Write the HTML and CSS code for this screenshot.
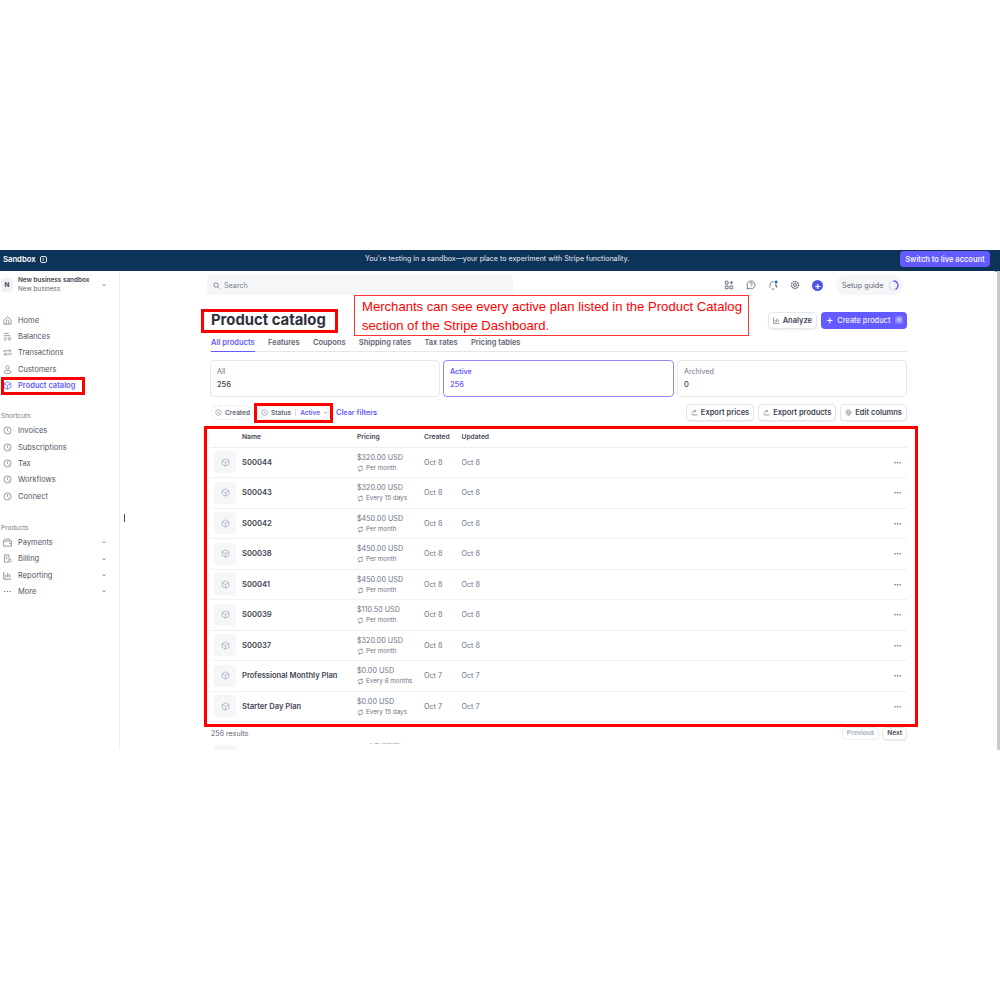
FILE: index.html
```html
<!DOCTYPE html>
<html lang="en">
<head>
  <meta charset="UTF-8">
  <title>Product catalog</title>
  <link rel="stylesheet" href="styles.css">
</head>
<body>
<svg class="defs" width="0" height="0">
  <symbol id="box" viewBox="0 0 16 16"><path d="M8 1.500 14 4.700v6.600L8 14.500 2 11.300V4.700zM2 4.700 8 8l6-3.300M8 8v6.500" fill="none" stroke="currentColor" stroke-width="1.300"/></symbol>
  <symbol id="clock" viewBox="0 0 16 16"><circle cx="8" cy="8" r="6.300" fill="none" stroke="currentColor" stroke-width="1.300"/><path d="M8 4.500V8l2 2" fill="none" stroke="currentColor" stroke-width="1.300"/></symbol>
  <symbol id="chev" viewBox="0 0 16 16"><path d="M3.500 6 8 10.500 12.500 6" fill="none" stroke="currentColor" stroke-width="2"/></symbol>
  <symbol id="repeat" viewBox="0 0 16 16"><path d="M3 9V6.500a3 3 0 0 1 3-3h6M10 1l2.500 2.500L10 6M13 7v2.500a3 3 0 0 1-3 3H4M6 15l-2.500-2.500L6 10" fill="none" stroke="currentColor" stroke-width="1.500"/></symbol>
  <symbol id="export" viewBox="0 0 16 16"><path d="M1.500 13.500h13M3 10c0-4 3-5.500 7-5.500M8 1.500l3 3-3 3" fill="none" stroke="currentColor" stroke-width="1.500"/></symbol>
  <symbol id="circx" viewBox="0 0 16 16"><circle cx="8" cy="8" r="6.500" fill="none" stroke="currentColor" stroke-width="1.300"/><path d="M5.500 5.500l5 5M10.500 5.500l-5 5" fill="none" stroke="currentColor" stroke-width="1.300"/></symbol>
  <symbol id="gear" viewBox="0 0 16 16"><circle cx="8" cy="8" r="2.300" fill="none" stroke="currentColor" stroke-width="1.500"/><circle cx="8" cy="8" r="5.600" fill="none" stroke="currentColor" stroke-width="2.200" stroke-dasharray="2.500 1.200"/></symbol>
  <symbol id="bars" viewBox="0 0 16 16"><path d="M1.500 1.500v13h13M5 11V7M8.500 11V3.500M12 11V6" fill="none" stroke="currentColor" stroke-width="1.500"/></symbol>
</svg>

<div class="shot">
  <div class="banner">
    <div class="banner-left">Sandbox <span class="info">i</span></div>
    <div class="banner-msg">You're testing in a sandbox—your place to experiment with Stripe functionality.</div>
    <button class="live">Switch to live account</button>
  </div>

  <div class="app">
    <aside class="side">
      <div class="acct">
        <span class="acct-logo">N</span>
        <div class="acct-text"><b>New business sandbox</b><span>New business</span></div>
        <svg class="chev"><use href="#chev"/></svg>
      </div>

      <nav class="nav">
        <a><svg class="ico" viewBox="0 0 16 16"><path d="M1.500 7 8 1.500 14.500 7v7.500h-13zM5.500 14.500V9.500a2.500 2.500 0 0 1 5 0v5" fill="none" stroke="currentColor" stroke-width="1.200"/></svg>Home</a>
        <a><svg class="ico" viewBox="0 0 16 16"><path d="M1.500 2.500h9M1.500 6.500h11M1.500 10.500h5M1.500 14h5" fill="none" stroke="currentColor" stroke-width="1.200"/><circle cx="11.500" cy="12" r="2.300" fill="none" stroke="currentColor" stroke-width="1.200"/></svg>Balances</a>
        <a><svg class="ico" viewBox="0 0 16 16"><path d="M1.500 7V5h12M11 2l3 3-3 3M14.500 9v2h-12M5 8l-3 3 3 3" fill="none" stroke="currentColor" stroke-width="1.200"/></svg>Transactions</a>
        <a><svg class="ico" viewBox="0 0 16 16"><circle cx="8" cy="4.500" r="3" fill="none" stroke="currentColor" stroke-width="1.200"/><rect x="2" y="10" width="12" height="5" rx="2.500" fill="none" stroke="currentColor" stroke-width="1.200"/></svg>Customers</a>
        <a class="on"><svg class="ico"><use href="#box"/></svg>Product catalog</a>
      </nav>

      <div class="nav-label">Shortcuts</div>
      <nav class="nav">
        <a><svg class="ico"><use href="#clock"/></svg>Invoices</a>
        <a><svg class="ico"><use href="#clock"/></svg>Subscriptions</a>
        <a><svg class="ico"><use href="#clock"/></svg>Tax</a>
        <a><svg class="ico"><use href="#clock"/></svg>Workflows</a>
        <a><svg class="ico"><use href="#clock"/></svg>Connect</a>
      </nav>

      <div class="nav-label nav-label-products">Products</div>
      <nav class="nav">
        <a><svg class="ico" viewBox="0 0 16 16"><path d="M1 5.500h14v9H1zM1 5.500 3 2h9l1 3.500M10.500 10h4.500" fill="none" stroke="currentColor" stroke-width="1.200"/></svg>Payments<svg class="chev"><use href="#chev"/></svg></a>
        <a><svg class="ico" viewBox="0 0 16 16"><path d="M9.500 14.500h-7v-13h8v7M5 5h3M5 8h3" fill="none" stroke="currentColor" stroke-width="1.200"/><circle cx="12" cy="12" r="2.500" fill="none" stroke="currentColor" stroke-width="1.200"/></svg>Billing<svg class="chev"><use href="#chev"/></svg></a>
        <a><svg class="ico"><use href="#bars"/></svg>Reporting<svg class="chev"><use href="#chev"/></svg></a>
        <a><svg class="ico" viewBox="0 0 16 16"><path d="M2 8h2M7 8h2M12 8h2" fill="none" stroke="currentColor" stroke-width="2"/></svg>More<svg class="chev"><use href="#chev"/></svg></a>
      </nav>
    </aside>

    <main class="main">
      <div class="topbar">
        <div class="search">
          <svg class="search-ico" viewBox="0 0 16 16"><circle cx="7" cy="7" r="5" fill="none" stroke="currentColor" stroke-width="1.700"/><path d="M11 11l4 4" stroke="currentColor" stroke-width="1.700"/></svg>
          Search
        </div>
        <div class="tools">
          <svg class="tool" viewBox="0 0 16 16"><path d="M2 2h4.500v4.500H2zM2 9.500h4.500V14H2zM9.500 9.500H14V14H9.500zM11.700 1.500v5.500M9 4.200h5.500" fill="none" stroke="currentColor" stroke-width="1.400"/></svg>
          <svg class="tool" viewBox="0 0 16 16"><path d="M8 1.500a6.300 6.300 0 1 1-3 11.800L1.500 14.500l1-3.300A6.300 6.300 0 0 1 8 1.500z" fill="none" stroke="currentColor" stroke-width="1.300"/><path d="M6 6.200a2 2 0 1 1 3 1.700c-.7.400-1 .8-1 1.600M8 11v1" fill="none" stroke="currentColor" stroke-width="1.300"/></svg>
          <svg class="tool" viewBox="0 0 16 16"><path d="M2 12c1.500-1.500 1.500-3 1.500-5a4.500 4.500 0 0 1 6-4.200M12.500 7c0 2 0 3.500 1.500 5zM6 14.500h4" fill="none" stroke="currentColor" stroke-width="1.400"/><circle cx="13" cy="3" r="2.400" fill="#0570de"/></svg>
          <svg class="tool"><use href="#gear"/></svg>
          <span class="add-round">+</span>
          <div class="setup">Setup guide
            <svg class="spin" viewBox="0 0 16 16"><circle cx="8" cy="8" r="6.500" fill="none" stroke="#dfe3ea" stroke-width="2"/><path d="M8 1.500a6.500 6.500 0 0 1 3 12.300" fill="none" stroke="#635bff" stroke-width="2"/></svg>
          </div>
        </div>
      </div>

      <div class="head">
        <h1>Product catalog</h1>
        <div class="head-btns">
          <button class="btn"><svg class="btn-ico"><use href="#bars"/></svg>Analyze</button>
          <button class="btn-main"><span class="plus">+</span>Create product<span class="key">n</span></button>
        </div>
      </div>

      <div class="tabs">
        <a class="on">All products</a>
        <a>Features</a>
        <a>Coupons</a>
        <a>Shipping rates</a>
        <a>Tax rates</a>
        <a>Pricing tables</a>
      </div>

      <div class="cards">
        <div class="card"><span>All</span><b>256</b></div>
        <div class="card on"><span>Active</span><b>256</b></div>
        <div class="card"><span>Archived</span><b>0</b></div>
      </div>

      <div class="filters">
        <span class="pill dashed"><svg class="pill-ico"><use href="#circx"/></svg>Created</span>
        <span class="pill pill-status"><svg class="pill-ico"><use href="#circx"/></svg>Status<i></i><em>Active</em><svg class="pill-chev"><use href="#chev"/></svg></span>
        <a class="clear">Clear filters</a>
        <div class="filter-btns">
          <button class="btn"><svg class="btn-ico"><use href="#export"/></svg>Export prices</button>
          <button class="btn"><svg class="btn-ico"><use href="#export"/></svg>Export products</button>
          <button class="btn"><svg class="btn-ico"><use href="#gear"/></svg>Edit columns</button>
        </div>
      </div>

      <div class="thead">
        <span class="c-name">Name</span><span class="c-price">Pricing</span><span class="c-created">Created</span><span>Updated</span>
      </div>
      <div class="row">
        <span class="tile"><svg><use href="#box"/></svg></span><b class="c-name">S00044</b>
        <div class="c-price"><div>$320.00 USD</div><small><svg><use href="#repeat"/></svg>Per month</small></div>
        <span class="c-created">Oct 8</span><span>Oct 8</span><span class="dots">···</span>
      </div>
      <div class="row">
        <span class="tile"><svg><use href="#box"/></svg></span><b class="c-name">S00043</b>
        <div class="c-price"><div>$320.00 USD</div><small><svg><use href="#repeat"/></svg>Every 15 days</small></div>
        <span class="c-created">Oct 8</span><span>Oct 8</span><span class="dots">···</span>
      </div>
      <div class="row">
        <span class="tile"><svg><use href="#box"/></svg></span><b class="c-name">S00042</b>
        <div class="c-price"><div>$450.00 USD</div><small><svg><use href="#repeat"/></svg>Per month</small></div>
        <span class="c-created">Oct 8</span><span>Oct 8</span><span class="dots">···</span>
      </div>
      <div class="row">
        <span class="tile"><svg><use href="#box"/></svg></span><b class="c-name">S00038</b>
        <div class="c-price"><div>$450.00 USD</div><small><svg><use href="#repeat"/></svg>Per month</small></div>
        <span class="c-created">Oct 8</span><span>Oct 8</span><span class="dots">···</span>
      </div>
      <div class="row">
        <span class="tile"><svg><use href="#box"/></svg></span><b class="c-name">S00041</b>
        <div class="c-price"><div>$450.00 USD</div><small><svg><use href="#repeat"/></svg>Per month</small></div>
        <span class="c-created">Oct 8</span><span>Oct 8</span><span class="dots">···</span>
      </div>
      <div class="row">
        <span class="tile"><svg><use href="#box"/></svg></span><b class="c-name">S00039</b>
        <div class="c-price"><div>$110.50 USD</div><small><svg><use href="#repeat"/></svg>Per month</small></div>
        <span class="c-created">Oct 8</span><span>Oct 8</span><span class="dots">···</span>
      </div>
      <div class="row">
        <span class="tile"><svg><use href="#box"/></svg></span><b class="c-name">S00037</b>
        <div class="c-price"><div>$320.00 USD</div><small><svg><use href="#repeat"/></svg>Per month</small></div>
        <span class="c-created">Oct 8</span><span>Oct 8</span><span class="dots">···</span>
      </div>
      <div class="row">
        <span class="tile"><svg><use href="#box"/></svg></span><b class="c-name">Professional Monthly Plan</b>
        <div class="c-price"><div>$0.00 USD</div><small><svg><use href="#repeat"/></svg>Every 6 months</small></div>
        <span class="c-created">Oct 7</span><span>Oct 7</span><span class="dots">···</span>
      </div>
      <div class="row">
        <span class="tile"><svg><use href="#box"/></svg></span><b class="c-name">Starter Day Plan</b>
        <div class="c-price"><div>$0.00 USD</div><small><svg><use href="#repeat"/></svg>Every 15 days</small></div>
        <span class="c-created">Oct 7</span><span>Oct 7</span><span class="dots">···</span>
      </div>

      <div class="foot">
        <span>256 results</span>
        <div class="pager"><button class="btn off">Previous</button><button class="btn">Next</button></div>
      </div>
      <div class="ghost"><span class="ghost-tile"></span><small>Per month</small></div>
    </main>
    <div class="scroll"></div>
  </div>

  <span class="caret"></span>
  <!-- red annotations drawn on top of the screenshot -->
  <div class="mark mark-nav"></div>
  <div class="mark mark-title"></div>
  <div class="mark mark-status"></div>
  <div class="mark mark-table"></div>
  <div class="note">Merchants can see every active plan listed in the Product Catalog section of the Stripe Dashboard.</div>
</div>
</body>
</html>
```

FILE: styles.css
```css
* { box-sizing: border-box; }
html, body { margin: 0; background: #fff; }
body { font-family: Inter, "Noto Sans", sans-serif; color: #414552; padding-top: 250px; height: 1000px; overflow: hidden; }
button { font-family: inherit; }
.defs { position: absolute; }

.shot { position: relative; width: 1000px; height: 500px; overflow: hidden; display: flex; flex-direction: column; background: #0e3359; }

.banner { height: 21px; flex: none; display: flex; align-items: center; color: #e8eef5; padding: 0 10px 3px 3px; position: relative; }
.banner-left { display: flex; align-items: center; gap: 4px; font-weight: 600; font-size: 7.700px; color: #fff; }
.info { width: 7px; height: 7px; border: 1px solid #dfe8f2; border-radius: 2px; font-size: 5px; line-height: 5px; text-align: center; }
.banner-msg { position: absolute; left: 365px; top: 3px; line-height: 12px; font-size: 7.100px; white-space: nowrap; }
.live { margin-left: auto; width: 90px; height: 16px; border: 0; border-radius: 4px; background: #635bff; color: #f2f1ff; font-size: 7.500px; font-weight: 600; padding: 0; }

.app { flex: 1; display: flex; background: #fff; border-radius: 0 6px 0 0; min-height: 0; position: relative; }

.side { width: 120px; flex: none; border-right: 1px solid #eceef2; padding-top: 6px; font-size: 7.500px; }
.acct { display: flex; align-items: center; height: 15px; padding-left: 1px; position: relative; }
.acct-logo { width: 12px; height: 14px; background: #f0f2f6; border-radius: 3px; font-size: 6.500px; font-weight: 700; color: #414552; text-align: center; line-height: 14px; flex: none; margin-right: 5px; }
.acct-text { display: flex; flex-direction: column; font-size: 6.400px; line-height: 9px; color: #5e6572; }
.acct-text b { color: #414552; font-weight: 600; white-space: nowrap; }
.chev { width: 6px; height: 6px; color: #68738a; position: absolute; left: 101px; top: 50%; margin-top: -3px; }

.nav { display: flex; flex-direction: column; }
.acct + .nav { margin-top: 20px; }
.nav a { height: 16.330px; display: flex; align-items: center; position: relative; color: #4f5565; white-space: nowrap; }
.nav a.on { color: #635bff; font-weight: 600; }
.ico { width: 9px; height: 9px; margin: 0 6px 0 3px; flex: none; color: #6a7383; }
.on .ico { color: #635bff; }
.nav-label { font-size: 6.500px; color: #717a8a; line-height: 10px; margin-top: 17px; margin-bottom: 2px; padding-left: 1px; }
.nav-label-products { margin-top: 19px; margin-bottom: 1px; }

.main { width: 697px; margin-left: 90px; flex: none; font-size: 7.500px; position: relative; }
.scroll { position: absolute; right: 0; top: 0; bottom: 0; width: 3px; background: #c9c9c9; }

.topbar { display: flex; align-items: center; height: 20px; margin: 4px 0 0 -3px; width: 696px; }
.search { width: 306px; height: 20px; background: #f5f6f8; border-radius: 4px; display: flex; align-items: center; color: #7a8394; font-size: 7.200px; padding-left: 6px; gap: 4px; }
.search-ico { width: 7px; height: 7px; color: #5e6572; }
.tools { margin-left: auto; display: flex; align-items: center; }
.tool { width: 10px; height: 10px; margin-right: 12px; color: #5e6572; }
.add-round { width: 11px; height: 11px; border-radius: 50%; background: #4f56e8; color: #fff; font-size: 10px; line-height: 10px; text-align: center; font-weight: 600; margin-right: 13px; }
.setup { width: 67px; height: 20px; border-radius: 10px; background: #f5f6f8; display: flex; align-items: center; padding-left: 6px; gap: 5px; color: #5e6572; font-size: 7.300px; white-space: nowrap; }
.spin { width: 11px; height: 11px; }

.head { display: flex; align-items: center; justify-content: space-between; height: 24px; margin-top: 13px; }
h1 { margin: 0 0 0 1px; font-size: 14.850px; font-weight: 700; color: #30313d; line-height: 24px; }
.head-btns { display: flex; gap: 4px; }
.btn { height: 17px; border: 1px solid #e3e6eb; border-radius: 4px; background: #fff; color: #414552; font-size: 7.500px; font-weight: 600; padding: 0 4px; display: inline-flex; align-items: center; gap: 3px; box-shadow: 0 1px 1px rgba(60, 66, 87, .08); white-space: nowrap; }
.btn-ico { width: 7px; height: 7px; color: #5e6572; flex: none; }
.btn-main { height: 17px; width: 86px; border: 0; border-radius: 4px; background: #635bff; color: #f3f2ff; font-size: 7.400px; font-weight: 500; display: flex; align-items: center; padding: 0 4px 0 5px; white-space: nowrap; }
.plus { font-size: 11px; line-height: 10px; margin-right: 4px; }
.key { margin-left: auto; width: 8px; height: 8px; border-radius: 2px; background: #8a84ff; font-size: 6px; line-height: 8px; text-align: center; }

.tabs { display: flex; gap: 13.300px; height: 18px; border-bottom: 1px solid #e3e6eb; padding: 0 0 0 1px; margin-top: 2px; color: #5e6572; font-weight: 600; line-height: 17px; }
.tabs a { height: 18px; white-space: nowrap; }
.tabs a.on { color: #635bff; border-bottom: 1px solid #635bff; }

.cards { display: grid; grid-template-columns: 230px 231px 230px; gap: 3px; margin-top: 8px; }
.card { height: 37px; border: 1px solid #e6e8ec; border-radius: 4px; padding: 5px 6px; display: flex; flex-direction: column; color: #6a7383; line-height: 12px; font-size: 7.100px; }
.card b { font-weight: 500; color: #414552; font-size: 7.500px; line-height: 14px; }
.card.on { border-color: #8e89f5; color: #635bff; font-weight: 600; }
.card.on b { color: #635bff; }

.filters { display: flex; align-items: center; height: 17px; margin-top: 7px; padding-left: 1px; font-weight: 600; }
.pill { height: 15px; border: 1px solid #e6e8ec; border-radius: 8px; display: inline-flex; align-items: center; padding: 0 3px; font-size: 6.500px; color: #5e6572; white-space: nowrap; margin-right: 5px; }
.pill.dashed { border-style: dashed; width: 41px; }
.pill-status { width: 72px; }
.pill-ico { width: 7px; height: 7px; margin-right: 3px; color: #7a8394; flex: none; }
.pill i { width: 1px; height: 7px; background: #d9dce3; margin: 0 4px; flex: none; }
.pill em { font-style: normal; color: #635bff; }
.pill-chev { width: 5px; height: 5px; margin-left: 3px; flex: none; }
.clear { color: #635bff; font-size: 7.300px; margin-left: 2px; white-space: nowrap; }
.filter-btns { margin-left: auto; display: flex; gap: 4px; }

.thead { display: flex; align-items: center; height: 21px; margin-top: 5.500px; border-bottom: 1px solid #eceef2; font-size: 6.700px; font-weight: 600; color: #414552; padding-left: 32px; }
.c-name { width: 115px; flex: none; white-space: nowrap; }
.c-price { width: 67px; flex: none; }
.c-created { width: 37.500px; flex: none; }
.row { display: flex; align-items: center; height: 30.500px; border-bottom: 1px solid #f0f1f4; padding-left: 4px; color: #6a7383; font-size: 7.200px; position: relative; }
.tile { width: 22px; height: 22px; background: #f5f6f8; border-radius: 4px; margin-right: 6px; flex: none; display: flex; align-items: center; justify-content: center; color: #a3acba; }
.tile svg { width: 9px; height: 9px; }
.row b { font-weight: 600; color: #414552; font-size: 7.600px; }
.row .c-price { margin-top: 1px; }
.row .c-price div { line-height: 11px; font-size: 7.200px; white-space: nowrap; }
.row small { display: flex; align-items: center; gap: 2px; font-size: 6.300px; line-height: 11px; white-space: nowrap; }
.row small svg { width: 7px; height: 7px; flex: none; }
.dots { position: absolute; right: 6px; font-size: 9px; font-weight: 700; color: #6a7383; letter-spacing: -.5px; }

.foot { display: flex; align-items: center; justify-content: space-between; height: 18px; margin-top: 2px; padding-left: 1px; color: #5e6572; font-size: 7.100px; }
.pager { display: flex; gap: 3px; }
.pager .btn { height: 13px; font-size: 6.500px; }
.pager .off { color: #a3acba; box-shadow: none; border-color: #eceef2; }
.ghost { height: 8px; margin-top: 1px; overflow: hidden; display: flex; padding-left: 4px; color: #6a7383; }
.ghost-tile { width: 22px; height: 22px; background: #f5f6f8; border-radius: 4px; margin-top: 2px; flex: none; }
.ghost small { font-size: 6.300px; margin-left: 125px; margin-top: -5px; padding-left: 9px; }

.caret { position: absolute; left: 124px; top: 264px; width: 1px; height: 8px; background: #3c4a66; }

.mark { position: absolute; border: 3px solid #f00; pointer-events: none; }
.mark-nav { left: 1px; top: 127px; width: 84px; height: 18px; }
.mark-title { left: 201px; top: 59px; width: 137px; height: 24px; }
.mark-status { left: 254px; top: 153px; width: 79px; height: 20px; }
.mark-table { left: 204px; top: 176px; width: 714px; height: 301px; }
.note { position: absolute; left: 354px; top: 45px; width: 395px; height: 41px; border: 1.500px solid #f33; background: #fff; color: #f00; font: 13.100px/19px "Liberation Sans", Arial, sans-serif; padding: 1px 0 1px 7px; }
```
